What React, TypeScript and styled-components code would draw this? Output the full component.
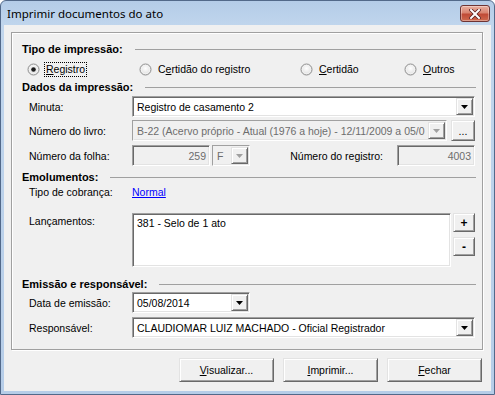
import React from 'react'
import styled, { createGlobalStyle } from 'styled-components'

const GlobalStyle = createGlobalStyle`
  html, body { margin: 0; padding: 0; background: #ffffff; }
  body {
    font-family: "Liberation Sans", Arial, sans-serif;
    font-size: 10.5px;
    color: #000;
  }
`

const Window = styled.div`
  width: 495px;
  height: 395px;
  box-sizing: border-box;
  display: flex;
  flex-direction: column;
  border: 1px solid #52698a;
  border-radius: 6px 6px 0 0;
  background: linear-gradient(180deg, #b4cce8 0%, #c1d6ed 26px, #b6cde8 100%);
  overflow: hidden;
`

const TitleBar = styled.div`
  height: 24px;
  flex-shrink: 0;
  display: flex;
  align-items: flex-start;
  justify-content: space-between;
  padding: 0 4px 0 6px;
`

const Title = styled.span`
  font-family: "Noto Sans", "Open Sans", sans-serif;
  font-size: 11.5px;
  line-height: 26px;
  color: #000;
`

const CloseButton = styled.div`
  margin-top: 4px;
  width: 30px;
  height: 17px;
  box-sizing: border-box;
  display: flex;
  align-items: center;
  justify-content: center;
  border: 1px solid #6e3434;
  border-radius: 3px;
  background: linear-gradient(180deg, #eab0a1 0%, #d98470 45%, #c04a36 55%, #cf6a4e 100%);
  box-shadow: inset 0 0 0 1px rgba(255, 255, 255, 0.35);
`

const Client = styled.div`
  flex: 1;
  margin: 0 3px 3px;
  padding: 7px 8px 0 7px;
  background: #f0f0f0;
  display: flex;
  flex-direction: column;
`

const Panel = styled.div`
  border: 1px solid #a0a0a0;
  box-shadow: inset 1px 1px 0 #ffffff, 1px 1px 0 #ffffff;
  padding: 9px 7px 11px 10px;
  display: flex;
  flex-direction: column;
`

const Header = styled.div<{ $mt?: number }>`
  margin-top: ${p => p.$mt ?? 0}px;
  height: 14px;
  display: flex;
  align-items: center;
  font-size: 11px;
  font-weight: bold;
  white-space: nowrap;
  &::after {
    content: '';
    flex: 1;
    margin-left: 12px;
    margin-right: -1px;
    border-top: 1px solid #a0a0a0;
  }
`

const Row = styled.div<{ $mt?: number; $top?: boolean }>`
  margin-top: ${p => p.$mt ?? 0}px;
  padding-left: 7px;
  min-height: 14px;
  display: flex;
  align-items: ${p => (p.$top ? 'flex-start' : 'center')};
`

const Label = styled.span<{ $pt?: number }>`
  width: 103px;
  flex-shrink: 0;
  padding-top: ${p => p.$pt ?? 0}px;
  white-space: nowrap;
`

const InlineLabel = styled.span`
  margin-left: auto;
  margin-right: 14px;
  white-space: nowrap;
`

const RadioRow = styled.div`
  margin-top: 5px;
  height: 16px;
  padding-left: 5px;
  display: flex;
  align-items: center;
`

const RadioItem = styled.div<{ $w?: number }>`
  width: ${p => (p.$w ? `${p.$w}px` : 'auto')};
  flex-shrink: 0;
  display: flex;
  align-items: center;
`

const RadioText = styled.span<{ $focus?: boolean }>`
  margin-left: 4px;
  padding: 0 1px;
  line-height: 13px;
  border: 1px dotted ${p => (p.$focus ? '#000' : 'transparent')};
`

const Sunken = styled.div<{ $w?: number; $h?: number; $soft?: boolean; $bg?: string }>`
  box-sizing: border-box;
  ${p => (p.$w ? `width: ${p.$w}px; flex-shrink: 0;` : 'flex: 1; min-width: 0;')}
  height: ${p => p.$h ?? 21}px;
  padding: 1px;
  display: flex;
  align-items: stretch;
  border: 1px solid;
  border-color: #a0a0a0 #ffffff #ffffff #a0a0a0;
  box-shadow: inset 1px 1px 0 ${p => (p.$soft ? '#f0f0f0' : '#696969')}, inset -1px -1px 0 #e3e3e3;
  background: ${p => p.$bg ?? '#ffffff'};
`

const FieldText = styled.div<{ $right?: boolean; $gray?: boolean }>`
  flex: 1;
  min-width: 0;
  overflow: hidden;
  white-space: nowrap;
  display: flex;
  align-items: center;
  justify-content: ${p => (p.$right ? 'flex-end' : 'flex-start')};
  padding: 0 ${p => (p.$right ? 2 : 3)}px 0 3px;
  color: ${p => (p.$gray ? '#6d6d6d' : '#000')};
`

const ListText = styled.div`
  padding: 2px 3px;
  white-space: nowrap;
`

const Raised = styled.div<{ $w?: number; $h?: number; $ml?: number }>`
  box-sizing: border-box;
  width: ${p => p.$w ?? 17}px;
  height: ${p => (p.$h ? `${p.$h}px` : 'auto')};
  margin-left: ${p => p.$ml ?? 0}px;
  flex-shrink: 0;
  display: flex;
  align-items: center;
  justify-content: center;
  background: #f0f0f0;
  border: 1px solid;
  border-color: #e3e3e3 #696969 #696969 #e3e3e3;
  box-shadow: inset 1px 1px 0 #ffffff, inset -1px -1px 0 #a0a0a0;
  white-space: nowrap;
`

const SmallGlyph = styled.span`
  font-weight: bold;
  font-size: 12px;
  line-height: 12px;
`

const SideButtons = styled.div`
  margin-left: 2px;
  display: flex;
  flex-direction: column;
  gap: 5px;
`

const Spacer = styled.div<{ $w: number }>`
  width: ${p => p.$w}px;
  flex-shrink: 0;
`

const Link = styled.a`
  color: #0000ff;
  text-decoration: underline;
  cursor: pointer;
`

const ButtonRow = styled.div`
  margin-top: 8px;
  padding-right: 1px;
  display: flex;
  justify-content: flex-end;
  gap: 9px;
`

const Key = styled.span`
  text-decoration: underline;
`

const Arrow = ({ disabled }: { disabled?: boolean }) => (
  <svg width="7" height="4" viewBox="0 0 7 4">
    <polygon points="0,0 7,0 3.5,4" fill={disabled ? '#a0a0a0' : '#000'} />
  </svg>
)

const Combo = ({ value, w, disabled }: { value: string; w?: number; disabled?: boolean }) => (
  <Sunken $w={w} $soft={disabled} $bg={disabled ? '#f0f0f0' : '#fff'}>
    <FieldText $gray={disabled}>{value}</FieldText>
    <Raised $w={17}>
      <Arrow disabled={disabled} />
    </Raised>
  </Sunken>
)

const RadioIcon = ({ checked }: { checked?: boolean }) => (
  <svg width="13" height="13" viewBox="0 0 13 13">
    <defs>
      <radialGradient id="rg" cx="50%" cy="40%" r="60%">
        <stop offset="0%" stopColor="#ffffff" />
        <stop offset="100%" stopColor="#dcdcdc" />
      </radialGradient>
    </defs>
    <circle cx="6.5" cy="6.5" r="5.5" fill="url(#rg)" stroke="#8f8f8f" strokeWidth="1" />
    <circle cx="6.5" cy="6.5" r="4.2" fill="none" stroke="#f4f4f4" strokeWidth="0.8" />
    {checked && <circle cx="6.5" cy="6.5" r="2.3" fill="#1d1d1d" />}
  </svg>
)

const CloseGlyph = () => (
  <svg width="12" height="10" viewBox="0 0 12 10">
    <path d="M2 1 L10 9 M10 1 L2 9" stroke="#5a2020" strokeWidth="3.6" strokeLinecap="square" />
    <path d="M2 1 L10 9 M10 1 L2 9" stroke="#ffffff" strokeWidth="2" strokeLinecap="square" />
  </svg>
)

export default function App() {
  return (
    <>
      <GlobalStyle />
      <Window>
        <TitleBar>
          <Title>Imprimir documentos do ato</Title>
          <CloseButton>
            <CloseGlyph />
          </CloseButton>
        </TitleBar>
        <Client>
          <Panel>
            <Header>Tipo de impressão:</Header>
            <RadioRow>
              <RadioItem $w={112}>
                <RadioIcon checked />
                <RadioText $focus><Key>R</Key>egistro</RadioText>
              </RadioItem>
              <RadioItem $w={161}>
                <RadioIcon />
                <RadioText>C<Key>e</Key>rtidão do registro</RadioText>
              </RadioItem>
              <RadioItem $w={104}>
                <RadioIcon />
                <RadioText><Key>C</Key>ertidão</RadioText>
              </RadioItem>
              <RadioItem>
                <RadioIcon />
                <RadioText><Key>O</Key>utros</RadioText>
              </RadioItem>
            </RadioRow>

            <Header $mt={3}>Dados da impressão:</Header>
            <Row $mt={2}>
              <Label>Minuta:</Label>
              <Combo value="Registro de casamento 2" />
            </Row>
            <Row $mt={3}>
              <Label>Número do livro:</Label>
              <Combo disabled value="B-22 (Acervo próprio - Atual (1976 a hoje) - 12/11/2009 a 05/0" />
              <Raised $w={24} $h={21} $ml={4}>...</Raised>
            </Row>
            <Row $mt={4}>
              <Label>Número da folha:</Label>
              <Sunken $w={78} $bg="#f0f0f0">
                <FieldText $right $gray>259</FieldText>
              </Sunken>
              <Spacer $w={2} />
              <Combo disabled w={38} value="F" />
              <InlineLabel>Número do registro:</InlineLabel>
              <Sunken $w={78} $bg="#f0f0f0">
                <FieldText $right $gray>4003</FieldText>
              </Sunken>
            </Row>

            <Header $mt={4}>Emolumentos:</Header>
            <Row $mt={1}>
              <Label>Tipo de cobrança:</Label>
              <Link>Normal</Link>
            </Row>
            <Row $mt={14} $top>
              <Label $pt={2}>Lançamentos:</Label>
              <Sunken $h={54}>
                <ListText>381 - Selo de 1 ato</ListText>
              </Sunken>
              <SideButtons>
                <Raised $w={22} $h={19}><SmallGlyph>+</SmallGlyph></Raised>
                <Raised $w={22} $h={19}><SmallGlyph>-</SmallGlyph></Raised>
              </SideButtons>
            </Row>

            <Header $mt={10}>Emissão e responsável:</Header>
            <Row $mt={1}>
              <Label>Data de emissão:</Label>
              <Combo w={118} value="05/08/2014" />
            </Row>
            <Row $mt={4}>
              <Label>Responsável:</Label>
              <Combo value="CLAUDIOMAR LUIZ MACHADO - Oficial Registrador" />
            </Row>
          </Panel>

          <ButtonRow>
            <Raised $w={95} $h={24}><span><Key>V</Key>isualizar...</span></Raised>
            <Raised $w={95} $h={24}><span><Key>I</Key>mprimir...</span></Raised>
            <Raised $w={95} $h={24}><span><Key>F</Key>echar</span></Raised>
          </ButtonRow>
        </Client>
      </Window>
    </>
  )
}
